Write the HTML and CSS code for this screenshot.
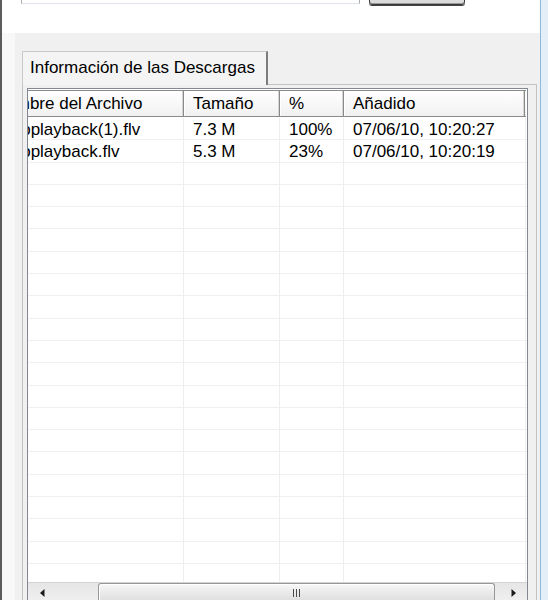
FILE: index.html
```html
<!DOCTYPE html>
<html lang="es">
  <head>
    <meta charset="UTF-8" />
    <meta name="viewport" content="width=device-width, initial-scale=1.0" />
    <title>Descargas</title>
    <link rel="stylesheet" href="styles.css">
  </head>
  <body>
    <div class="window">
      <div class="client">
        <div class="toolbar">
          <input class="url" type="text">
          <button class="go"></button>
        </div>
        <div class="content">
          <div class="tab">Información de las Descargas</div>
          <div class="panel">
            <div class="list">
              <div class="viewport">
                <div class="cols">
                  <div class="head">
                    <div class="hcell c1">Nombre del Archivo</div>
                    <div class="hcell c2">Tamaño</div>
                    <div class="hcell c3">%</div>
                    <div class="hcell c4">Añadido</div>
                  </div>
                  <div class="rows">
                    <div class="row">
                      <div class="cell c1 name">videoplayback(1).flv</div>
                      <div class="cell c2">7.3 M</div>
                      <div class="cell c3">100%</div>
                      <div class="cell c4">07/06/10, 10:20:27</div>
                    </div>
                    <div class="row">
                      <div class="cell c1 name">videoplayback.flv</div>
                      <div class="cell c2">5.3 M</div>
                      <div class="cell c3">23%</div>
                      <div class="cell c4">07/06/10, 10:20:19</div>
                    </div>
                  </div>
                </div>
              </div>
              <div class="hscroll">
                <div class="sb-btn">
                  <svg width="5" height="8" viewBox="0 0 5 8"><path d="M4.5 0 L0 4 L4.5 8 Z" fill="#1a1a1a"/></svg>
                </div>
                <div class="sb-track">
                  <div class="sb-thumb"><span class="grip"></span></div>
                </div>
                <div class="sb-btn">
                  <svg width="5" height="8" viewBox="0 0 5 8"><path d="M0.5 0 L5 4 L0.5 8 Z" fill="#1a1a1a"/></svg>
                </div>
              </div>
            </div>
          </div>
        </div>
      </div>
      <div class="frame-r"></div>
    </div>
  </body>
</html>
```

FILE: styles.css
```css
* {
  margin: 0;
  padding: 0;
  box-sizing: border-box;
}
body {
  width: 548px;
  height: 600px;
  overflow: hidden;
  background: #ffffff;
  font-family: "Liberation Sans", Arial, sans-serif;
  font-size: 17px;
  color: #000;
}
.window {
  display: flex;
  height: 600px;
  border-left: 2px solid #5c5c5c;
}
.client {
  width: 538px;
  display: flex;
  flex-direction: column;
  background: #f8f8f8;
}
.frame-r {
  width: 8px;
  border-left: 1px solid #8fb8dc;
  background: #e4eef7;
}

/* address box and button, mostly scrolled off the top */
.toolbar {
  height: 33px;
  display: flex;
  align-items: flex-start;
  background: #ffffff;
}
.url {
  margin-left: 19px;
  margin-top: -21px;
  width: 339px;
  height: 25px;
  border: 1px solid #a9acb2;
  border-bottom-color: #dfe4ea;
  background: #fff;
  outline: none;
}
.go {
  margin-left: 9px;
  margin-top: -21px;
  width: 96px;
  height: 26px;
  border: 1px solid #3a3a3a;
  border-radius: 3px;
  background: linear-gradient(#f2f2f2, #d9d9d9);
  box-shadow: inset 0 -1px #9a9a9a, 0 1px #444;
}

.content {
  flex: 1;
  margin-left: 13px;
  padding-top: 18px;
  background: #f0f0f0;
  display: flex;
  flex-direction: column;
}
.tab {
  position: relative;
  z-index: 1;
  margin-left: 7px;
  margin-bottom: -1px;
  width: 246px;
  height: 34px;
  padding-left: 7px;
  line-height: 32px;
  background: #f4f4f4;
  border: 1px solid #c9c9c9;
  border-right: 2px solid #7c7c7c;
  border-bottom: none;
  white-space: nowrap;
}
.panel {
  margin-left: 7px;
  width: 515px;
  flex: 1;
  border: 1px solid #c2c2c2;
  border-bottom: none;
  padding: 3px 0 0 4px;
}

/* list view */
.list {
  width: 501px;
  border: 1px solid #828790;
  border-bottom: none;
  background: #fff;
  padding-top: 1px;
}
.viewport {
  overflow: hidden;
  width: 499px;
}
.cols {
  margin-left: -43px;
  width: 560px;
}
.head {
  display: flex;
  height: 27px;
  border-top: 1px solid #8a8a8a;
  border-bottom: 1px solid #8a8a8a;
  width: 541px;
  background: linear-gradient(#ffffff, #f1f1f1);
}
.hcell {
  line-height: 26px;
  padding-left: 9px;
  border-right: 1px solid #8a8a8a;
  box-shadow: inset 1px 0 #ffffff, inset -1px 0 #d5d5d5;
  white-space: nowrap;
  overflow: hidden;
}
.c1 { width: 199px; }
.c2 { width: 96px; }
.c3 { width: 64px; }
.c4 { width: 181px; }
.rows {
  margin-top: 1px;
  height: 464px;
  background-image:
    linear-gradient(to right,
      transparent 198px, #eeeeee 198px 199px,
      transparent 199px 294px, #eeeeee 294px 295px,
      transparent 295px 358px, #eeeeee 358px 359px,
      transparent 359px 540px, #eeeeee 540px 541px,
      transparent 541px),
    repeating-linear-gradient(to bottom,
      transparent 0 21.3px, #f0f0f0 21.3px 22.3px);
}
.row {
  display: flex;
  height: 22.3px;
}
.cell {
  line-height: 22px;
  padding-top: 1px;
  padding-left: 9px;
  white-space: nowrap;
  overflow: hidden;
}
.cell.name {
  padding-left: 5px;
}

/* horizontal scrollbar */
.hscroll {
  display: flex;
  height: 18px;
  width: 499px;
  background: linear-gradient(#e6e6e6, #efefef);
  border-top: 1px solid #d4d4d4;
}
.sb-btn {
  width: 28px;
  display: flex;
  align-items: center;
  justify-content: center;
  padding-top: 2px;
}
.sb-track {
  flex: 1;
  padding-left: 42px;
}
.sb-thumb {
  width: 397px;
  height: 18px;
  border: 1px solid #979797;
  border-bottom: none;
  border-radius: 3px 3px 0 0;
  background: linear-gradient(#f7f7f7, #dedede);
  box-shadow: inset 1px 1px #ffffff;
  display: flex;
  justify-content: center;
  padding-top: 5px;
}
.grip {
  width: 7px;
  height: 8px;
  background: repeating-linear-gradient(to right, #4a4a4a 0 1px, transparent 1px 3px);
}
```
